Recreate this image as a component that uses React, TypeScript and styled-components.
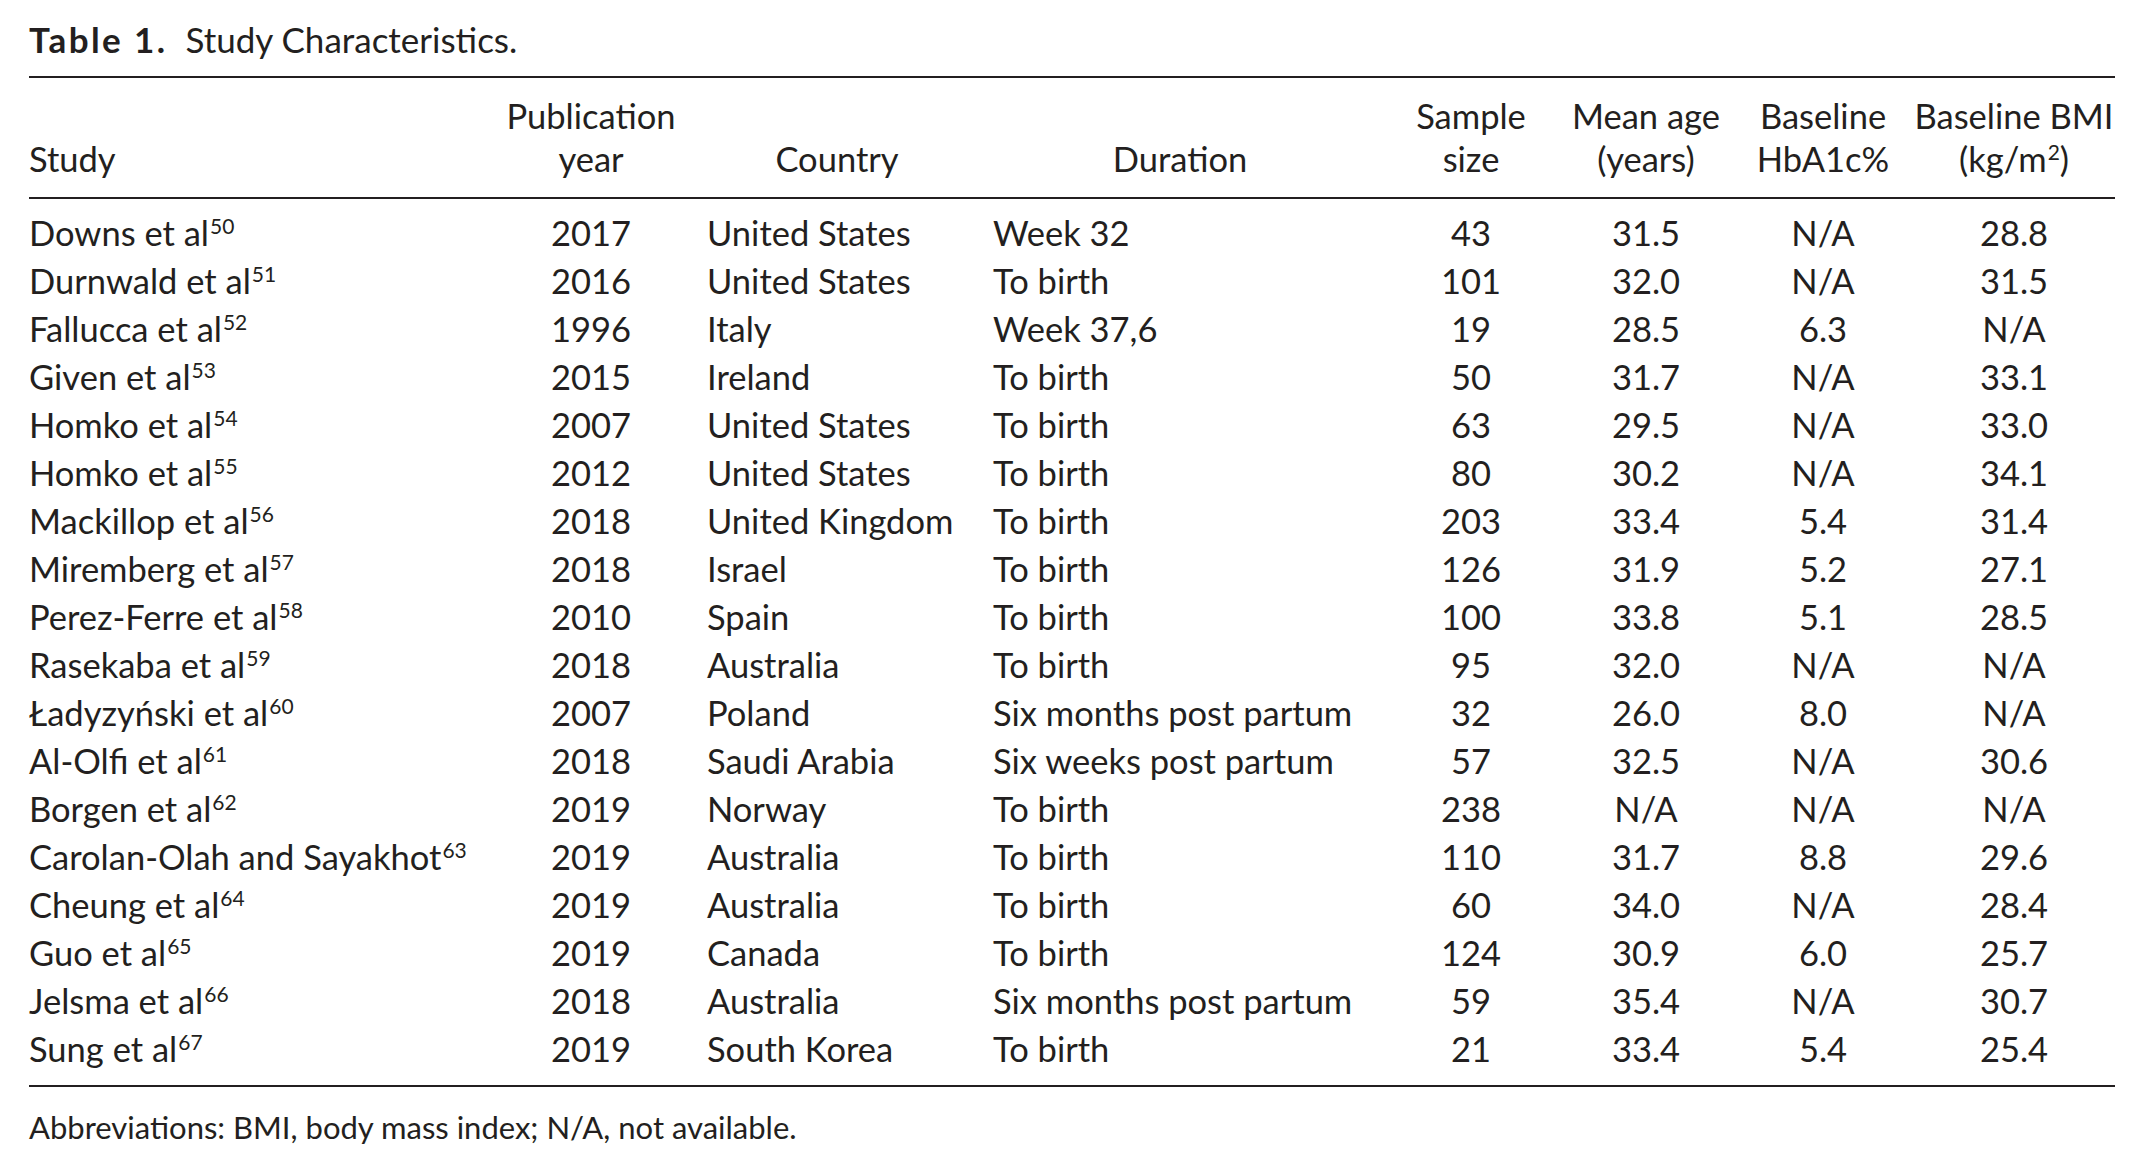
import React from 'react';
import styled, { createGlobalStyle } from 'styled-components';

const GlobalStyle = createGlobalStyle`
	html, body {
		margin: 0;
		padding: 0;
		background: #ffffff;
	}
	body {
		font-family: Lato, 'Liberation Sans', sans-serif;
		color: #231f20;
	}
`;

interface Row {
	study: string;
	ref: number;
	year: string;
	country: string;
	duration: string;
	sample: string;
	age: string;
	hba1c: string;
	bmi: string;
}

const rows: Row[] = [
	{ study: 'Downs et al', ref: 50, year: '2017', country: 'United States', duration: 'Week 32', sample: '43', age: '31.5', hba1c: 'N/A', bmi: '28.8' },
	{ study: 'Durnwald et al', ref: 51, year: '2016', country: 'United States', duration: 'To birth', sample: '101', age: '32.0', hba1c: 'N/A', bmi: '31.5' },
	{ study: 'Fallucca et al', ref: 52, year: '1996', country: 'Italy', duration: 'Week 37,6', sample: '19', age: '28.5', hba1c: '6.3', bmi: 'N/A' },
	{ study: 'Given et al', ref: 53, year: '2015', country: 'Ireland', duration: 'To birth', sample: '50', age: '31.7', hba1c: 'N/A', bmi: '33.1' },
	{ study: 'Homko et al', ref: 54, year: '2007', country: 'United States', duration: 'To birth', sample: '63', age: '29.5', hba1c: 'N/A', bmi: '33.0' },
	{ study: 'Homko et al', ref: 55, year: '2012', country: 'United States', duration: 'To birth', sample: '80', age: '30.2', hba1c: 'N/A', bmi: '34.1' },
	{ study: 'Mackillop et al', ref: 56, year: '2018', country: 'United Kingdom', duration: 'To birth', sample: '203', age: '33.4', hba1c: '5.4', bmi: '31.4' },
	{ study: 'Miremberg et al', ref: 57, year: '2018', country: 'Israel', duration: 'To birth', sample: '126', age: '31.9', hba1c: '5.2', bmi: '27.1' },
	{ study: 'Perez-Ferre et al', ref: 58, year: '2010', country: 'Spain', duration: 'To birth', sample: '100', age: '33.8', hba1c: '5.1', bmi: '28.5' },
	{ study: 'Rasekaba et al', ref: 59, year: '2018', country: 'Australia', duration: 'To birth', sample: '95', age: '32.0', hba1c: 'N/A', bmi: 'N/A' },
	{ study: 'Ładyzyński et al', ref: 60, year: '2007', country: 'Poland', duration: 'Six months post partum', sample: '32', age: '26.0', hba1c: '8.0', bmi: 'N/A' },
	{ study: 'Al-Olfi et al', ref: 61, year: '2018', country: 'Saudi Arabia', duration: 'Six weeks post partum', sample: '57', age: '32.5', hba1c: 'N/A', bmi: '30.6' },
	{ study: 'Borgen et al', ref: 62, year: '2019', country: 'Norway', duration: 'To birth', sample: '238', age: 'N/A', hba1c: 'N/A', bmi: 'N/A' },
	{ study: 'Carolan-Olah and Sayakhot', ref: 63, year: '2019', country: 'Australia', duration: 'To birth', sample: '110', age: '31.7', hba1c: '8.8', bmi: '29.6' },
	{ study: 'Cheung et al', ref: 64, year: '2019', country: 'Australia', duration: 'To birth', sample: '60', age: '34.0', hba1c: 'N/A', bmi: '28.4' },
	{ study: 'Guo et al', ref: 65, year: '2019', country: 'Canada', duration: 'To birth', sample: '124', age: '30.9', hba1c: '6.0', bmi: '25.7' },
	{ study: 'Jelsma et al', ref: 66, year: '2018', country: 'Australia', duration: 'Six months post partum', sample: '59', age: '35.4', hba1c: 'N/A', bmi: '30.7' },
	{ study: 'Sung et al', ref: 67, year: '2019', country: 'South Korea', duration: 'To birth', sample: '21', age: '33.4', hba1c: '5.4', bmi: '25.4' },
];

// column widths in px, left to right
const widths = [456, 212, 280, 406, 176, 174, 180, 202];

function App() {
	return (
		<>
			<GlobalStyle />
			<Page>
				<Caption>
					<strong>Table 1.</strong>
					<span>Study Characteristics.</span>
				</Caption>
				<Table>
					<colgroup>
						{widths.map((w, i) => (
							<col key={i} style={{ width: w }} />
						))}
					</colgroup>
					<thead>
						<tr>
							<Head $align="left">Study</Head>
							<Head>
								Publication
								<br />
								year
							</Head>
							<Head>Country</Head>
							<Head>Duration</Head>
							<Head>
								Sample
								<br />
								size
							</Head>
							<Head>
								Mean age
								<br />
								(years)
							</Head>
							<Head>
								Baseline
								<br />
								HbA1c%
							</Head>
							<Head>
								Baseline BMI
								<br />
								(kg/m<Sup>2</Sup>)
							</Head>
						</tr>
					</thead>
					<tbody>
						{rows.map((r, i) => (
							<tr key={i}>
								<Cell $align="left">
									{r.study}
									<Sup>{r.ref}</Sup>
								</Cell>
								<Cell>{r.year}</Cell>
								<Cell $align="left" $indent={10}>
									{r.country}
								</Cell>
								<Cell $align="left" $indent={16}>
									{r.duration}
								</Cell>
								<Cell>{r.sample}</Cell>
								<Cell>{r.age}</Cell>
								<Cell>{r.hba1c}</Cell>
								<Cell>{r.bmi}</Cell>
							</tr>
						))}
					</tbody>
				</Table>
				<Footnote>Abbreviations: BMI, body mass index; N/A, not available.</Footnote>
			</Page>
		</>
	);
}

const Page = styled.div`
	width: 2086px;
	padding: 15px 0 0 29px;
	font-size: 34.5px;
	line-height: 48px;
`;

const Caption = styled.div`
	display: flex;
	gap: 18px;
	margin-bottom: 13px;
	font-size: 35px;

	strong {
		font-weight: 700;
		letter-spacing: 2.4px;
	}
`;

const Table = styled.table`
	width: 2086px;
	table-layout: fixed;
	border-collapse: collapse;
	border-top: 2px solid #231f20;
	border-bottom: 2px solid #231f20;

	thead tr {
		border-bottom: 2px solid #231f20;
	}

	thead th {
		padding-top: 16px;
		padding-bottom: 17px;
	}

	tbody tr:first-child td {
		padding-top: 10px;
	}

	tbody tr:last-child td {
		padding-bottom: 12px;
	}
`;

const Head = styled.th<{ $align?: 'left' | 'center' }>`
	font-weight: 400;
	line-height: 43px;
	vertical-align: bottom;
	text-align: ${(p) => p.$align || 'center'};
	padding: 0;
	white-space: nowrap;
`;

const Cell = styled.td<{ $align?: 'left' | 'center'; $indent?: number }>`
	padding: 0 0 0 ${(p) => p.$indent || 0}px;
	height: 48px;
	text-align: ${(p) => p.$align || 'center'};
	white-space: nowrap;
`;

const Sup = styled.sup`
	font-size: 21px;
	line-height: 0;
	vertical-align: 12px;
	margin-left: 1px;
`;

const Footnote = styled.p`
	margin: 16px 0 0;
	font-size: 31px;
`;

export default App;
